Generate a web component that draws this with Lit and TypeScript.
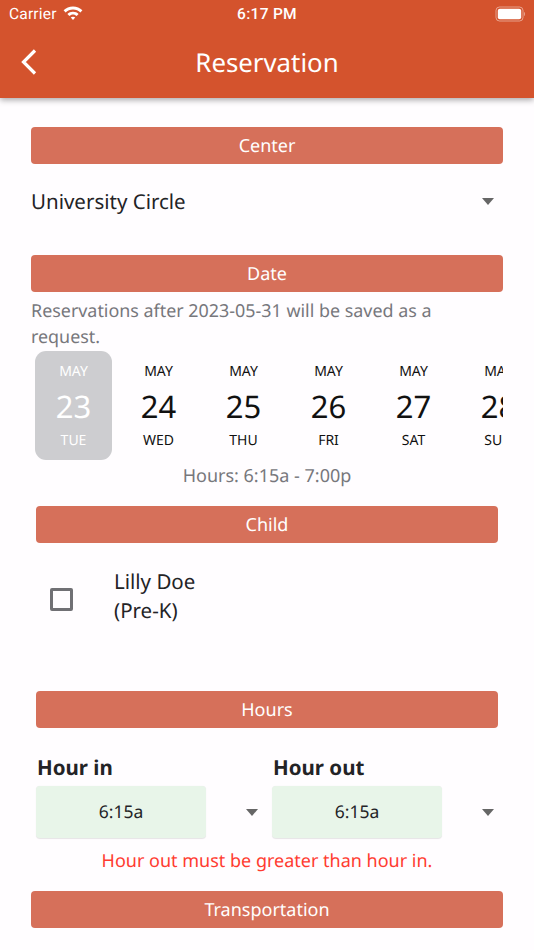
import { LitElement, html, css } from "lit";
import { customElement } from "lit/decorators.js";

const days = [
  ["MAY", "23", "TUE"],
  ["MAY", "24", "WED"],
  ["MAY", "25", "THU"],
  ["MAY", "26", "FRI"],
  ["MAY", "27", "SAT"],
  ["MAY", "28", "SUN"],
];

@customElement("app-root")
export class AppRoot extends LitElement {
  static styles = css`
    :host {
      display: block;
      width: 534px;
      height: 950px;
      overflow: hidden;
      background: #fffdff;
      font-family: "Noto Sans", sans-serif;
      color: #232326;
      text-rendering: geometricPrecision;
    }
    .header {
      height: 98px;
      background: #d4532d;
      box-shadow: 0 2px 6px rgba(0, 0, 0, 0.35);
      color: #fff;
      display: flex;
      flex-direction: column;
      position: relative;
    }
    .status {
      height: 27px;
      display: grid;
      grid-template-columns: 1fr auto 1fr;
      align-items: center;
      padding: 0 9px;
    }
    .carrier {
      display: flex;
      align-items: center;
      gap: 6px;
      font-family: Roboto, sans-serif;
      font-size: 15.5px;
      letter-spacing: 0.2px;
    }
    .time {
      font-weight: 500;
      font-family: Roboto, sans-serif;
      font-size: 15.5px;
      letter-spacing: 0.3px;
    }
    .battery {
      justify-self: end;
      display: flex;
    }
    .nav {
      flex: 1;
      display: grid;
      grid-template-columns: 60px 1fr 60px;
      align-items: center;
      padding-bottom: 1px;
    }
    .back {
      padding-left: 20px;
      display: flex;
    }
    .title {
      text-align: center;
      font-size: 25.8px;
      line-height: 34px;
    }
    .content {
      display: flex;
      flex-direction: column;
      padding-top: 29px;
    }
    .wide {
      margin: 0 31px;
    }
    .narrow {
      margin: 0 36px;
    }
    .bar {
      height: 37px;
      border-radius: 4px;
      background: #d6705a;
      color: #fff;
      font-size: 18px;
      line-height: 38px;
      text-align: center;
    }
    .center-row {
      height: 91px;
      display: flex;
      align-items: center;
      justify-content: space-between;
      margin: 0 31px;
      padding: 0 9px 16px 0;
      font-size: 20.5px;
      box-sizing: border-box;
    }
    .arrow {
      width: 0;
      height: 0;
      border-left: 6.5px solid transparent;
      border-right: 6.5px solid transparent;
      border-top: 7px solid #666;
    }
    .note {
      margin: 7px 31px 0;
      font-size: 17.9px;
      line-height: 25.5px;
      color: #77777c;
      height: 52px;
    }
    .cal {
      margin: 0 31px;
      display: flex;
      overflow: hidden;
      padding-left: 4px;
      gap: 8px;
    }
    .day {
      flex: 0 0 77px;
      height: 109px;
      border-radius: 11px;
      display: flex;
      flex-direction: column;
      align-items: center;
      color: #111;
      font-size: 14px;
    }
    .day.sel {
      background: #cdcdd0;
      color: #fff;
    }
    .mon {
      margin-top: 11px;
      line-height: 20px;
    }
    .num {
      font-size: 31px;
      line-height: 42px;
      margin-top: 4px;
    }
    .dow {
      line-height: 20px;
      margin-top: 3px;
    }
    .hours {
      text-align: center;
      font-size: 18px;
      line-height: 25px;
      color: #77777c;
      margin-top: 4px;
      height: 42px;
    }
    .child {
      height: 148px;
      box-sizing: border-box;
      margin: 0 36px;
      display: flex;
      padding: 25px 0 0 14px;
    }
    .check {
      width: 23px;
      height: 23px;
      box-sizing: border-box;
      border: 3px solid #707074;
      border-radius: 2px;
      margin-top: 20px;
      flex: none;
    }
    .name {
      margin-left: 41px;
      font-size: 20.5px;
      line-height: 28.5px;
    }
    .times {
      display: grid;
      grid-template-columns: 236px 1fr;
      margin: 26px 36px 0;
    }
    .col {
      display: flex;
      flex-direction: column;
    }
    .label {
      font-size: 20.5px;
      font-weight: 700;
      line-height: 28px;
      padding-left: 1px;
      height: 32px;
    }
    .sel-row {
      display: flex;
      align-items: center;
      justify-content: space-between;
      padding-right: 14px;
    }
    .col:last-child .sel-row {
      padding-right: 4px;
    }
    .sel-box {
      width: 170px;
      height: 52px;
      border-radius: 4px;
      background: #e8f5e9;
      box-shadow: 0 0.5px 1px rgba(0, 0, 0, 0.1);
      text-align: center;
      line-height: 53px;
      font-size: 17.5px;
    }
    .error {
      text-align: center;
      color: #ff3b30;
      font-size: 18px;
      line-height: 25px;
      margin-top: 11px;
      height: 42px;
    }
  `;

  render() {
    return html`
      <div class="header">
        <div class="status">
          <div class="carrier">
            Carrier
            <svg width="20" height="17" viewBox="0 0 20 16">
              <path fill="#fff" d="M10 1C6.300 1 3 2.400.6 4.800l2 2.100C4.500 5 7.100 3.900 10 3.900s5.500 1.100 7.400 3l2-2.100C17 2.400 13.700 1 10 1z" />
              <path fill="#fff" d="M10 6.200c-2.200 0-4.200.9-5.600 2.300l2 2.100c.9-.9 2.200-1.500 3.600-1.500s2.700.6 3.600 1.500l2-2.100C14.200 7.100 12.200 6.200 10 6.200z" />
              <path fill="#fff" d="M10 11.200c-.9 0-1.700.4-2.200.9L10 14.500l2.200-2.400c-.5-.5-1.300-.9-2.200-.9z" />
            </svg>
          </div>
          <div class="time">6:17 PM</div>
          <div class="battery">
            <svg width="30" height="16" viewBox="0 0 30 16">
              <rect x="1" y="1" width="27" height="14" rx="3.500" fill="none" stroke="#fff" stroke-opacity="0.45" />
              <rect x="2.800" y="2.800" width="23.400" height="10.400" rx="2" fill="#fff" />
              <path d="M29 6v4c.8-.3 1-1.200 1-2s-.2-1.700-1-2z" fill="#fff" fill-opacity="0.45" />
            </svg>
          </div>
        </div>
        <div class="nav">
          <div class="back">
            <svg width="18" height="28" viewBox="0 0 18 28">
              <path d="M15 2.500 3.500 14 15 25.500" fill="none" stroke="#fff" stroke-width="3.200" />
            </svg>
          </div>
          <div class="title">Reservation</div>
          <div></div>
        </div>
      </div>
      <div class="content">
        <div class="bar wide">Center</div>
        <div class="center-row">
          <span>University Circle</span>
          <span class="arrow"></span>
        </div>
        <div class="bar wide">Date</div>
        <div class="note">Reservations after 2023-05-31 will be saved as a request.</div>
        <div class="cal">
          ${days.map(
            (d, i) => html`
              <div class="day ${i === 0 ? "sel" : ""}">
                <div class="mon">${d[0]}</div>
                <div class="num">${d[1]}</div>
                <div class="dow">${d[2]}</div>
              </div>
            `
          )}
        </div>
        <div class="hours">Hours: 6:15a - 7:00p</div>
        <div class="bar narrow">Child</div>
        <div class="child">
          <div class="check"></div>
          <div class="name">Lilly Doe<br />(Pre-K)</div>
        </div>
        <div class="bar narrow">Hours</div>
        <div class="times">
          <div class="col">
            <div class="label">Hour in</div>
            <div class="sel-row"><div class="sel-box">6:15a</div><span class="arrow"></span></div>
          </div>
          <div class="col">
            <div class="label">Hour out</div>
            <div class="sel-row"><div class="sel-box">6:15a</div><span class="arrow"></span></div>
          </div>
        </div>
        <div class="error">Hour out must be greater than hour in.</div>
        <div class="bar wide">Transportation</div>
      </div>
    `;
  }
}
